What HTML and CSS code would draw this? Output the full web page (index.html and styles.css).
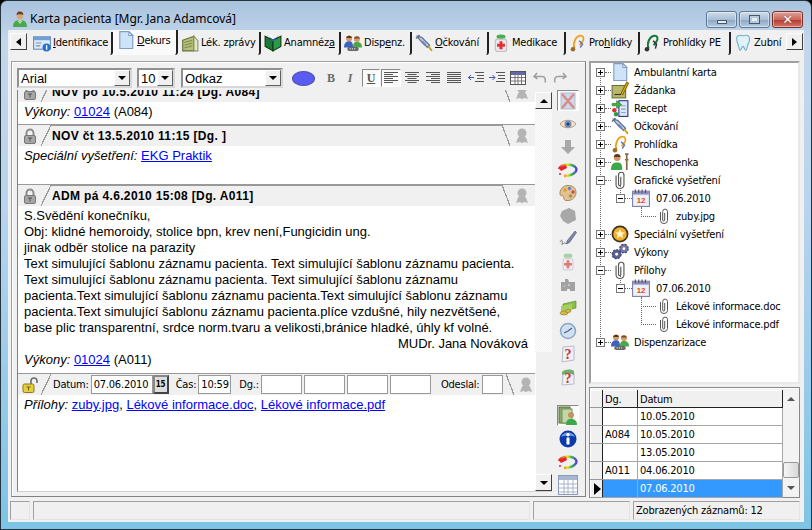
FILE: index.html
```html
<!DOCTYPE html>
<html lang="cs">
<head>
<meta charset="utf-8">
<title>Karta pacienta</title>
<link rel="stylesheet" href="styles.css">
</head>
<body>
<svg class="defs" width="0" height="0" aria-hidden="true">
<defs>
<symbol id="person" viewBox="0 0 16 16"><ellipse cx="8" cy="4.500" rx="3.200" ry="4" fill="#d9a478"/><path d="M4.600 4C4.600 1 6.500 .5 8 .5s3.400 .7 3.400 3.500C10 3 6 3 4.600 4z" fill="#6b4320"/><path d="M1 16c0-5 3-6.500 5-7l2 2 2-2c2 .5 5 2 5 7z" fill="#4aa84a"/><path d="M6 9l2 2 2-2 .6 1L8 13 5.400 10z" fill="#a9e2a0"/></symbol>
<symbol id="doc" viewBox="0 0 16 16"><path d="M2.500 .5h8l3.500 3.500v11.500H2.500z" fill="#cfe3f8" stroke="#7e9fc4"/><path d="M10.500 .5v3.500H14z" fill="#fff" stroke="#7e9fc4"/></symbol>
<symbol id="card" viewBox="0 0 16 16"><rect x=".5" y="2.500" width="15" height="11" fill="#dcebfa" stroke="#6c8fb8"/><rect x=".5" y="2.500" width="15" height="3" fill="#6fa0d6"/><path d="M2.500 8h5M2.500 10.500h4" stroke="#7d8fa5"/><circle cx="12" cy="12" r="3.500" fill="#1e74c8"/><rect x="11.500" y="10" width="1.200" height="4" fill="#fff"/></symbol>
<symbol id="note" viewBox="0 0 16 16"><path d="M1.500 5.500l10-3.500v13h-10z" fill="#b7c078" stroke="#65703c"/><path d="M3 7.500l7-2M3 10l7-2M3 12.500l7-2" stroke="#808b4c"/><path d="M11.500 2L15 6v9h-3.500z" fill="#e5e8c8" stroke="#8b956a"/></symbol>
<symbol id="book" viewBox="0 0 16 16"><path d="M1 2l7 3.500V15L1 11z" fill="#1d7a35" stroke="#0d3b18"/><path d="M15 2L8 5.500V15l7-4z" fill="#2d9a4a" stroke="#0d3b18"/><path d="M3 1l5 4 5-4-5 6z" fill="#3a56b8"/><path d="M4 2l1 1M6 1l1 2M10 2l1 1" stroke="#fff"/></symbol>
<symbol id="group" viewBox="0 0 16 16"><circle cx="4.500" cy="4" r="2.700" fill="#d39a6a"/><path d="M2 3.500C2 1 7 1 7 3.500z" fill="#5b3a1c"/><path d="M0 12c0-4 2-5.500 4.500-5.500S8 8 8 12z" fill="#3e62c2"/><circle cx="11.500" cy="4.500" r="2.700" fill="#d39a6a"/><path d="M9 4C9 1.500 14 1.500 14 4z" fill="#7c4b1f"/><path d="M8 12c0-4 1-5 3.500-5S16 8 16 12z" fill="#49a849"/><rect x="3" y="11.500" width="10" height="3.500" rx="1.500" fill="#666"/><path d="M5 13.200h6" stroke="#ddd" stroke-dasharray="1 1"/></symbol>
<symbol id="syringe" viewBox="0 0 16 16"><path d="M2 2l4 1 7 7-2 2-7-7z" fill="#b9c9e2" stroke="#5d6e8c"/><path d="M7 6l3 3-1.500 1.500-3-3z" fill="#6c84c8"/><path d="M12 11l3 4" stroke="#c9a21b" stroke-width="1.500"/><path d="M1 4l3-3" stroke="#5d6e8c" stroke-width="1.500"/></symbol>
<symbol id="bottle" viewBox="0 0 16 16"><ellipse cx="8" cy="2.500" rx="4" ry="2" fill="#46b04a"/><rect x="3" y="4.500" width="10" height="11" rx="2" fill="#e8e6ea" stroke="#c1bec8"/><path d="M8 6.500v7M4.500 10h7" stroke="#e03030" stroke-width="2.600"/></symbol>
<symbol id="bottlefade" viewBox="0 0 16 16"><ellipse cx="8" cy="2.500" rx="4" ry="2" fill="#a8d2a8"/><rect x="3.500" y="5" width="9" height="10" rx="2" fill="#eee" stroke="#d5d2da"/><path d="M8 6.500v7M4.500 10h7" stroke="#e27878" stroke-width="2.400"/></symbol>
<symbol id="steth" viewBox="0 0 16 16"><path d="M5 13C3 8 6 2 10 1.500c3-.3 4 3 1.500 6L9.500 10" fill="none" stroke="#eaa21c" stroke-width="1.600"/><circle cx="3.500" cy="13.500" r="2" fill="#9b6b2a"/><path d="M9 6l3 3-2 3" fill="none" stroke="#5c77c9" stroke-width="1.300"/></symbol>
<symbol id="stethgreen" viewBox="0 0 16 16"><path d="M5 13C3 8 6 2 10 1.500c3-.3 4 3 1.500 6L9.500 10" fill="none" stroke="#157a3a" stroke-width="1.800"/><circle cx="3.500" cy="13.500" r="2" fill="#333"/><path d="M9 6l3 3-1 4" fill="none" stroke="#333" stroke-width="1.300"/></symbol>
<symbol id="tooth" viewBox="0 0 16 16"><path d="M3.500 1.500c2-1 3 0 4.500 0s2.500-1 4.500 0 1.500 5 0 7.500c-1 2-1 5.500-2 5.500S9 11 8 11s-1.500 3.500-2.500 3.500S4.500 11 3.500 9 1.500 2.500 3.500 1.500z" fill="#dff2fa" stroke="#74aecb"/></symbol>
<symbol id="pad" viewBox="0 0 16 16"><rect x="1" y="4" width="12" height="11" fill="#b7b96a" stroke="#6e7038"/><path d="M3 12h6" stroke="#333"/><path d="M9 11l5-10 1.500 1-5 10z" fill="#f3c11a" stroke="#8c6a08"/></symbol>
<symbol id="recipe" viewBox="0 0 16 16"><rect x="7" y="1.500" width="8" height="14" fill="#dbe8f6" stroke="#2e3a96"/><path d="M9 6h4M9 9h4M9 12h4" stroke="#8aa0c0"/><path d="M1 4h4V1.500L9.500 5 5 8.500V6H1z" fill="#3fb23f" stroke="#1d6f1d" stroke-width=".5"/><circle cx="3" cy="10" r="2" fill="#d33"/><circle cx="4.500" cy="13.500" r="2" fill="#2d9a4a"/></symbol>
<symbol id="crutch" viewBox="0 0 16 16"><circle cx="5.500" cy="4" r="3" fill="#cf9566"/><path d="M2.500 3.500C2.500 0 8.500 0 8.500 3.500z" fill="#5b3a1c"/><path d="M0 15c0-5 2-6.500 5.500-6.500S10 10 10 15z" fill="#3ba84a"/><path d="M12.500 1h3M14 1v14M12.500 6h3" stroke="#8a6a44" stroke-width="1.500"/></symbol>
<symbol id="clip" viewBox="0 0 16 16"><path d="M4.500 4v8.500a3.500 3 0 0 0 7 0V3.500a2.400 2.400 0 0 0-4.800 0v8.500a1 1 0 0 0 2 0V5" fill="none" stroke="#555" stroke-width="1"/></symbol>
<symbol id="cal" viewBox="0 0 16 16"><rect x=".5" y="2" width="15" height="13.500" fill="#eef0f8" stroke="#7f83a8"/><rect x="1" y="2" width="14" height="3" fill="#8b8ec2"/><path d="M3 .5v3M6 .5v3M9 .5v3M12 .5v3" stroke="#555"/><text x="8" y="12.500" text-anchor="middle" class="caltext">12</text></symbol>
<symbol id="star" viewBox="0 0 16 16"><circle cx="8" cy="8" r="7.500" fill="#3a3320"/><circle cx="8" cy="8" r="6" fill="#f4ae2c"/><path d="M8 3.500l1.300 3 3.200.2-2.500 2 .8 3.100L8 10.100l-2.800 1.700.8-3.100-2.500-2 3.200-.2z" fill="#fff3c8"/></symbol>
<symbol id="gears" viewBox="0 0 16 16"><circle cx="5" cy="10" r="4" fill="#5a5f92" stroke="#3c4068" stroke-dasharray="2 1"/><circle cx="5" cy="10" r="1.300" fill="#fff"/><circle cx="11.500" cy="5" r="3.800" fill="#77799e" stroke="#3c4068" stroke-dasharray="2 1"/><circle cx="11.500" cy="5" r="1.200" fill="#fff"/></symbol>
<symbol id="lock" viewBox="0 0 16 16"><path d="M4.500 8V5a3.500 3.500 0 0 1 7 0v3" fill="none" stroke="#8d8d8d" stroke-width="2"/><rect x="2.500" y="7.500" width="11" height="8" rx="1.500" fill="#a6a6a6" stroke="#777"/><path d="M6 10h4M8 10v3.500" stroke="#555"/></symbol>
<symbol id="unlock" viewBox="0 0 16 16"><path d="M9 7V4a3 3 0 0 1 6 0v2" fill="none" stroke="#6c6c6c" stroke-width="1.600"/><rect x="1" y="7" width="11" height="8.500" rx="1.500" fill="#e5cd3c" stroke="#8a7a1c"/><path d="M4.500 10h4M6.500 10v3.500" stroke="#6f6210"/></symbol>
<symbol id="ghost" viewBox="0 0 16 16"><circle cx="8" cy="5" r="4.500" fill="#b4b4b4"/><path d="M2 15c1-2 1-4 2.500-6h7C13 11 13 13 14 15l-3.500-1L8 15l-2.500-1z" fill="#b4b4b4"/></symbol>
<symbol id="xmark" viewBox="0 0 18 18"><rect x="2" y="1" width="14" height="16" fill="#cfd8e6" stroke="#b5bccb"/><path d="M3 2l12 14M15 2L3 16" stroke="#d88a8a" stroke-width="2.400"/></symbol>
<symbol id="eye" viewBox="0 0 18 18"><path d="M1 9c3-5 13-5 16 0-3 5-13 5-16 0z" fill="#f0e3cf" stroke="#b99a7a"/><circle cx="9" cy="9" r="3.500" fill="#6f8ec0"/><circle cx="9" cy="9" r="1.500" fill="#2c3a5c"/></symbol>
<symbol id="down" viewBox="0 0 18 18"><path d="M6 2h6v7h4l-7 7-7-7h4z" fill="#a8a8a8"/></symbol>
<symbol id="swirl" viewBox="0 0 22 18"><path d="M2 8c2-5 14-6 17-1 2 4-4 8-12 8" fill="none" stroke="url(#rb)" stroke-width="2.400"/><path d="M2 7l7-3 1 3-6 3z" fill="#e8202a"/><circle cx="3" cy="13" r="1" fill="#e8202a"/></symbol>
<linearGradient id="rb" x1="0" x2="1"><stop offset="0" stop-color="#e8202a"/><stop offset=".5" stop-color="#e8e020"/><stop offset=".7" stop-color="#3ac040"/><stop offset="1" stop-color="#5040d8"/></linearGradient>
<symbol id="palette" viewBox="0 0 18 18"><path d="M9 1.500C3.500 1.500 .5 6 1 10c.5 3 2 1 3 2s0 4 3 4.500c6 .8 10-3.500 10-8S14 1.500 9 1.500z" fill="#e6bf8e" stroke="#a98a64"/><circle cx="6" cy="6" r="1.700" fill="#d8a028"/><circle cx="10.500" cy="4.500" r="1.700" fill="#5a86c8"/><circle cx="14" cy="8" r="1.700" fill="#c84a4a"/><circle cx="11.500" cy="12" r="1.700" fill="#88a058"/></symbol>
<symbol id="blob" viewBox="0 0 18 18"><path d="M3 4l7-3 6 3 1 9-8 4-5-3-3-5z" fill="#a8a8a8"/></symbol>
<symbol id="pen" viewBox="0 0 18 18"><path d="M8 11l8-10 1.500 1.500-7 10-3 1.500z" fill="#7c8ab0" stroke="#47506c" stroke-width=".6"/><path d="M1 12c2-4 3 0 2 2s3-3 4 0" fill="none" stroke="#777"/></symbol>
<symbol id="puzzle" viewBox="0 0 18 18"><path d="M2 6h4V3h3l1 3h6v9h-5v-2H8v2H2z" fill="#a2a2a2"/><path d="M5 10h1M9 9h2" stroke="#eee"/></symbol>
<symbol id="money" viewBox="0 0 18 18"><path d="M4 5l13-3v7L4 12z" fill="#8bbf4a" stroke="#4f8028" stroke-width=".6"/><path d="M2 7l11-2v6L2 13z" fill="#a6d05c"/><ellipse cx="5" cy="14" rx="4" ry="2" fill="#d8b850" stroke="#937a20" stroke-width=".6"/><ellipse cx="9" cy="12" rx="3" ry="1.500" fill="#d8b850" stroke="#937a20" stroke-width=".6"/></symbol>
<symbol id="clock" viewBox="0 0 18 18"><circle cx="9" cy="9" r="7.500" fill="#cfe0f2" stroke="#8da6c8" stroke-width="1.500"/><path d="M9 9l4-3M9 9L5 11" stroke="#50607c" stroke-width="1.200"/></symbol>
<symbol id="quest" viewBox="0 0 18 18"><path d="M4 2l11-1v14L3 17z" fill="#eef0f4" stroke="#b8bccb"/><text x="9" y="14" text-anchor="middle" class="qtext">?</text></symbol>
<symbol id="questgreen" viewBox="0 0 18 18"><path d="M4 6l11-1v11L3 17z" fill="#eef0f4" stroke="#b8bccb"/><path d="M3 4c3-3 9-3 12-1v4c-4-2-8-2-12 0z" fill="#6fb06f"/><text x="9" y="15" text-anchor="middle" class="qtext">?</text></symbol>
<symbol id="folderp" viewBox="0 0 20 20"><rect x="1" y="1" width="11" height="16" fill="#8aa86a" stroke="#58703e"/><rect x="4" y="3" width="10" height="14" fill="#c0d8a8" stroke="#74905a"/><circle cx="13" cy="9" r="3" fill="#c98f5e"/><path d="M8 19c0-5 2-6 5-6s6 1 6 6z" fill="#3ba84a"/></symbol>
<symbol id="info" viewBox="0 0 18 18"><circle cx="9" cy="9" r="8.500" fill="#0c3aa8"/><path d="M2 7c2-6 12-6 14 0-4-2-10-2-14 0z" fill="#6f9ae6"/><rect x="7.500" y="7.500" width="3" height="7" fill="#fff"/><circle cx="9" cy="4.700" r="1.700" fill="#fff"/></symbol>
<symbol id="table" viewBox="0 0 20 20"><rect x=".5" y=".5" width="19" height="19" fill="#fff" stroke="#8a9bb8"/><rect x="1" y="1" width="18" height="4" fill="#a8b8d0"/><path d="M1 9h18M1 13h18M1 17h18M6 5v14M10 5v14M15 5v14" stroke="#a6b4cb"/></symbol>
<symbol id="tbl" viewBox="0 0 16 16"><rect x=".5" y="1.500" width="15" height="13" fill="#fff" stroke="#555"/><rect x="1" y="2" width="14" height="3" fill="#6468a8"/><path d="M1 7.500h14M1 11h14M5 5v9M8 5v9M11.500 5v9" stroke="#777"/></symbol>
<symbol id="undo" viewBox="0 0 16 16"><path d="M5 3L2 6.500 5.500 9M2.500 6.500H10c3 0 4 3 3 6" fill="none" stroke="#9d9d9d" stroke-width="1.500"/></symbol>
<symbol id="redo" viewBox="0 0 16 16"><path d="M11 3l3 3.500L10.500 9M13.500 6.500H6c-3 0-4 3-3 6" fill="none" stroke="#9d9d9d" stroke-width="1.500"/></symbol>
<symbol id="al-l" viewBox="0 0 14 12"><path d="M0 .5h14M0 2.500h9M0 4.500h14M0 6.500h9M0 8.500h14M0 10.500h9" stroke="#555"/></symbol>
<symbol id="al-c" viewBox="0 0 14 12"><path d="M0 .5h14M2.500 2.500h9M0 4.500h14M2.500 6.500h9M0 8.500h14M2.500 10.500h9" stroke="#555"/></symbol>
<symbol id="al-r" viewBox="0 0 14 12"><path d="M0 .5h14M5 2.500h9M0 4.500h14M5 6.500h9M0 8.500h14M5 10.500h9" stroke="#555"/></symbol>
<symbol id="al-j" viewBox="0 0 14 12"><path d="M0 .5h14M0 2.500h14M0 4.500h14M0 6.500h14M0 8.500h14M0 10.500h14" stroke="#555"/></symbol>
<symbol id="ind-l" viewBox="0 0 16 12"><path d="M7 .5h9M9 3.500h7M9 6.500h7M7 9.500h9" stroke="#555"/><path d="M0 5.500h6M3 3l-2.500 2.500L3 8" fill="none" stroke="#4a50b0"/></symbol>
<symbol id="ind-r" viewBox="0 0 16 12"><path d="M7 .5h9M9 3.500h7M9 6.500h7M7 9.500h9" stroke="#555"/><path d="M0 5.500h6M3.500 3L6 5.500 3.500 8" fill="none" stroke="#4a50b0"/></symbol>
</defs>
</svg>

<div class="window">
  <header class="titlebar">
    <svg class="ico16"><use href="#person"/></svg>
    <span class="title">Karta pacienta [Mgr. Jana Adamcová]</span>
    <div class="caption">
      <span class="capbtn"><i class="gl-min"></i></span>
      <span class="capbtn"><i class="gl-max"></i></span>
      <span class="capbtn close"><span class="gl-x">✕</span></span>
    </div>
  </header>

  <nav class="tabs">
    <span class="nudge"><i class="tri-left"></i></span>
    <span class="tab w83"><svg class="ico18"><use href="#card"/></svg><span><u>I</u>dentifikace</span></span>
    <span class="tab active w65"><svg class="ico18"><use href="#doc"/></svg><span><u>D</u>ekurs</span></span>
    <span class="tab w83"><svg class="ico18"><use href="#note"/></svg><span>Lék. zprávy</span></span>
    <span class="tab w80"><svg class="ico18"><use href="#book"/></svg><span>Anamnéz<u>a</u></span></span>
    <span class="tab w71"><svg class="ico18"><use href="#group"/></svg><span>Disp<u>e</u>nz.</span></span>
    <span class="tab w77"><svg class="ico18"><use href="#syringe"/></svg><span><u>O</u>čkování</span></span>
    <span class="tab w77"><svg class="ico18"><use href="#bottle"/></svg><span>Medikace</span></span>
    <span class="tab w74"><svg class="ico18"><use href="#steth"/></svg><span>Pro<u>h</u>lídky</span></span>
    <span class="tab w91"><svg class="ico18"><use href="#stethgreen"/></svg><span>Prohlídky PE</span></span>
    <span class="tab w54 last"><svg class="ico18"><use href="#tooth"/></svg><span>Zubní</span></span>
    <span class="nudge right"><i class="tri-right"></i></span>
  </nav>

  <div class="client">
    <main class="work">
      <section class="leftpane">
        <div class="fmtbar">
          <span class="combo w115"><span class="val">Arial</span><i class="drop"></i></span>
          <span class="combo w38"><span class="val">10</span><i class="drop"></i></span>
          <span class="combo w102"><span class="val">Odkaz</span><i class="drop"></i></span>
          <i class="colordot"></i>
          <b class="fb">B</b>
          <i class="fi">I</i>
          <span class="fu pressed">U</span>
          <span class="alb pressed"><svg class="alg"><use href="#al-l"/></svg></span>
          <span class="alb"><svg class="alg"><use href="#al-c"/></svg></span>
          <span class="alb"><svg class="alg"><use href="#al-r"/></svg></span>
          <span class="alb"><svg class="alg"><use href="#al-j"/></svg></span>
          <span class="alb gapl"><svg class="indg"><use href="#ind-l"/></svg></span>
          <span class="alb"><svg class="indg"><use href="#ind-r"/></svg></span>
          <span class="alb"><svg class="ico16"><use href="#tbl"/></svg></span>
          <span class="alb gapl"><svg class="ico16"><use href="#undo"/></svg></span>
          <span class="alb"><svg class="ico16"><use href="#redo"/></svg></span>
        </div>

        <div class="editrow">
          <div class="editor">
            <div class="doc">
              <article class="rec clipped">
                <div class="rechead">
                  <svg class="ico16"><use href="#lock"/></svg><i class="slant"></i>
                  <b class="rectitle">NOV po 10.5.2010 11:24 [Dg. A084]</b><i class="slant back"></i>
                  <svg class="ico16 ghost"><use href="#ghost"/></svg>
                </div>
                <div class="recbody short"><p><em>Výkony:</em> <a>01024</a> (A084)</p></div>
              </article>
              <article class="rec">
                <div class="rechead">
                  <svg class="ico16"><use href="#lock"/></svg><i class="slant"></i>
                  <b class="rectitle">NOV čt 13.5.2010 11:15 [Dg. ]</b><i class="slant back"></i>
                  <svg class="ico16 ghost"><use href="#ghost"/></svg>
                </div>
                <div class="recbody tall"><p><em>Speciální vyšetření:</em> <a>EKG Praktik</a></p></div>
              </article>
              <article class="rec">
                <div class="rechead">
                  <svg class="ico16"><use href="#lock"/></svg><i class="slant"></i>
                  <b class="rectitle">ADM pá 4.6.2010 15:08 [Dg. A011]</b><i class="slant back"></i>
                  <svg class="ico16 ghost"><use href="#ghost"/></svg>
                </div>
                <div class="recbody full">
                  <p>S.Svědění konečníku,</p>
                  <p>Obj: klidné hemoroidy, stolice bpn, krev není,Fungicidin ung.</p>
                  <p>jinak odběr stolice na parazity</p>
                  <p>Text simulující šablonu záznamu pacienta. Text simulující šablonu záznamu pacienta.</p>
                  <p>Text simulující šablonu záznamu pacienta. Text simulující šablonu záznamu</p>
                  <p>pacienta.Text simulující šablonu záznamu pacienta.Text simulující šablonu záznamu</p>
                  <p>pacienta.Text simulující šablonu záznamu pacienta.plíce vzdušné, hily nezvětšené,</p>
                  <p>base plic transparentní, srdce norm.tvaru a velikosti,bránice hladké, úhly kf volné.</p>
                  <p class="sign">MUDr. Jana Nováková</p>
                  <p><em>Výkony:</em> <a>01024</a> (A011)</p>
                </div>
              </article>
              <article class="rec">
                <div class="rechead form">
                  <svg class="ico16 unl"><use href="#unlock"/></svg><i class="slant"></i>
                  <label class="flabel">Datum:</label><span class="field w62">07.06.2010</span><span class="calbtn">15</span>
                  <label class="flabel l6">Čas:</label><span class="field w33">10:59</span>
                  <label class="flabel l8">Dg.:</label><span class="field w41"></span><span class="field w41"></span><span class="field w41"></span><span class="field w41"></span>
                  <label class="flabel l8">Odeslal:</label><span class="field w22"></span>
                  <i class="slant back"></i>
                  <svg class="ico16 ghost"><use href="#ghost"/></svg>
                </div>
                <div class="recbody"><p><em>Přílohy:</em> <a>zuby.jpg</a>, <a>Lékové informace.doc</a>, <a>Lékové informace.pdf</a></p></div>
              </article>
            </div>
            <div class="vscroll">
              <span class="sbtn"><i class="tri-up"></i></span>
              <span class="strack"></span>
              <span class="sthumb"></span>
              <span class="sbtn"><i class="tri-down"></i></span>
            </div>
          </div>

          <aside class="sidebar">
            <span class="sb pressed"><svg class="ico18"><use href="#xmark"/></svg></span>
            <span class="sb"><svg class="ico18"><use href="#eye"/></svg></span>
            <span class="sb"><svg class="ico18"><use href="#down"/></svg></span>
            <span class="sb"><svg class="ico20"><use href="#swirl"/></svg></span>
            <span class="sb"><svg class="ico18"><use href="#palette"/></svg></span>
            <span class="sb"><svg class="ico18"><use href="#blob"/></svg></span>
            <span class="sb"><svg class="ico18"><use href="#pen"/></svg></span>
            <span class="sb"><svg class="ico18"><use href="#bottlefade"/></svg></span>
            <span class="sb"><svg class="ico18"><use href="#puzzle"/></svg></span>
            <span class="sb"><svg class="ico18"><use href="#money"/></svg></span>
            <span class="sb"><svg class="ico18"><use href="#clock"/></svg></span>
            <span class="sb"><svg class="ico18"><use href="#quest"/></svg></span>
            <span class="sb"><svg class="ico18"><use href="#questgreen"/></svg></span>
            <span class="sb sep pressed"><svg class="ico20"><use href="#folderp"/></svg></span>
            <span class="sb"><svg class="ico18"><use href="#info"/></svg></span>
            <span class="sb"><svg class="ico20"><use href="#swirl"/></svg></span>
            <span class="sb"><svg class="ico20"><use href="#table"/></svg></span>
          </aside>
        </div>
      </section>

      <section class="rightpane">
        <div class="tree">
          <div class="node"><i class="exp plus"></i><i class="dots"></i><svg class="ico18"><use href="#doc"/></svg><span>Ambulantní karta</span></div>
          <div class="node"><i class="exp plus"></i><i class="dots"></i><svg class="ico18"><use href="#pad"/></svg><span>Žádanka</span></div>
          <div class="node"><i class="exp plus"></i><i class="dots"></i><svg class="ico18"><use href="#recipe"/></svg><span>Recept</span></div>
          <div class="node"><i class="exp plus"></i><i class="dots"></i><svg class="ico18"><use href="#syringe"/></svg><span>Očkování</span></div>
          <div class="node"><i class="exp plus"></i><i class="dots"></i><svg class="ico18"><use href="#steth"/></svg><span>Prohlídka</span></div>
          <div class="node"><i class="exp plus"></i><i class="dots"></i><svg class="ico18"><use href="#crutch"/></svg><span>Neschopenka</span></div>
          <div class="node"><i class="exp minus"></i><i class="dots"></i><svg class="ico18"><use href="#clip"/></svg><span>Grafické vyšetření</span></div>
          <div class="node lv2"><i class="exp minus"></i><i class="dots"></i><svg class="ico18"><use href="#cal"/></svg><span>07.06.2010</span></div>
          <div class="node lv3 first"><i class="elbow"></i><svg class="ico16"><use href="#clip"/></svg><span>zuby.jpg</span></div>
          <div class="node"><i class="exp plus"></i><i class="dots"></i><svg class="ico18"><use href="#star"/></svg><span>Speciální vyšetření</span></div>
          <div class="node"><i class="exp plus"></i><i class="dots"></i><svg class="ico18"><use href="#gears"/></svg><span>Výkony</span></div>
          <div class="node"><i class="exp minus"></i><i class="dots"></i><svg class="ico18"><use href="#clip"/></svg><span>Přílohy</span></div>
          <div class="node lv2"><i class="exp minus"></i><i class="dots"></i><svg class="ico18"><use href="#cal"/></svg><span>07.06.2010</span></div>
          <div class="node lv3 first"><i class="elbow"></i><svg class="ico16"><use href="#clip"/></svg><span>Lékové informace.doc</span></div>
          <div class="node lv3"><i class="elbow long"></i><svg class="ico16"><use href="#clip"/></svg><span>Lékové informace.pdf</span></div>
          <div class="node"><i class="exp plus"></i><i class="dots"></i><svg class="ico18"><use href="#group"/></svg><span>Dispenzarizace</span></div>
        </div>
        <div class="gridbox">
          <table class="grid">
            <thead><tr><th class="ind"></th><th class="dg">Dg.</th><th>Datum</th></tr></thead>
            <tbody>
              <tr><td class="ind"></td><td></td><td>10.05.2010</td></tr>
              <tr><td class="ind"></td><td>A084</td><td>10.05.2010</td></tr>
              <tr><td class="ind"></td><td></td><td>13.05.2010</td></tr>
              <tr><td class="ind"></td><td>A011</td><td>04.06.2010</td></tr>
              <tr class="sel"><td class="ind"><i class="tri-cur"></i></td><td></td><td>07.06.2010</td></tr>
            </tbody>
          </table>
          <div class="gscroll">
            <span class="gsbtn"><i class="tri-up grey"></i></span>
            <span class="gtrack"></span>
            <span class="gthumb"></span>
            <span class="gsbtn"><i class="tri-down grey"></i></span>
          </div>
        </div>
      </section>
    </main>
    <footer class="status">
      <span class="cell c1"></span>
      <span class="cell c2"></span>
      <span class="cell c3"></span>
      <span class="cell c4">Zobrazených záznamů: 12</span>
    </footer>
  </div>
</div>
</body>
</html>
```
FILE: styles.css
```css
* { box-sizing: border-box; }
html, body { margin: 0; padding: 0; }
body { width: 812px; height: 530px; overflow: hidden; background: #000; font-family: "DejaVu Sans Condensed", "DejaVu Sans", sans-serif; font-size: 11px; letter-spacing: -.2px; color: #000; }
.defs { position: absolute; }
svg { display: block; flex: none; }
i { display: block; flex: none; }
.caltext { font: bold 7px "Liberation Sans", sans-serif; fill: #e8480c; }
.qtext { font: bold 14px "Liberation Serif", serif; fill: #c83030; }
.ico16 { width: 16px; height: 16px; }
.ico18 { width: 18px; height: 18px; }
.ico20 { width: 22px; height: 20px; }

.window { width: 812px; height: 530px; display: flex; flex-direction: column; padding: 0 7px 7px; border: 1px solid #25343f; border-radius: 7px 7px 0 0; background: linear-gradient(#a9c3dc 0, #c2d7ec 40px, #b9d4ee 200px, #7cc4e6 530px); }

.titlebar { height: 29px; display: flex; align-items: center; padding: 6px 0 0 4px; flex: none; }
.title { margin-left: 2px; font: 12px "Noto Sans", sans-serif; letter-spacing: 0; }
.caption { margin-left: auto; margin-right: 1px; margin-top: 2px; display: flex; gap: 2px; }
.capbtn { width: 31px; height: 17px; border: 1px solid #5f7a97; border-radius: 3px; background: linear-gradient(#cfdcea, #a9bfd6 50%, #8aa6c4 52%, #b6cadf); display: flex; align-items: center; justify-content: center; box-shadow: inset 0 0 0 1px rgba(255,255,255,.45); }
.capbtn.close { border-color: #7a2f26; background: linear-gradient(#e2a096, #c8685a 50%, #b33a2a 52%, #d2776a); color: #fff; }
.gl-min { width: 10px; height: 4px; margin-top: 4px; background: #e6ecf3; border: 1px solid #46586c; }
.gl-max { width: 11px; height: 9px; background: #e6ecf3; border: 1px solid #46586c; box-shadow: inset 0 0 0 2px #b8c9db; }
.gl-x { font: bold 13px/13px "DejaVu Sans", sans-serif; text-shadow: 0 0 1px #5c1d14; }

.tabs { height: 25px; flex: none; display: flex; align-items: flex-end; background: #f0f0f0; padding-left: 2px; }
.nudge { width: 17px; height: 17px; flex: none; align-self: center; margin: 0 3px 2px 0; background: #f0f0f0; border: 1px solid; border-color: #fff #404040 #404040 #fff; display: flex; align-items: center; justify-content: center; }
.nudge.right { margin: 0 0 2px 1px; }
.tri-left { border: 4px solid transparent; border-right: 5px solid #000; border-left: 0; }
.tri-right { border: 4px solid transparent; border-left: 5px solid #000; border-right: 0; }
.tri-up { border: 4px solid transparent; border-bottom: 4px solid #000; border-top: 0; }
.tri-down { border: 4px solid transparent; border-top: 4px solid #000; border-bottom: 0; }
.tri-up.grey { border-bottom-color: #555; }
.tri-down.grey { border-top-color: #555; }
.tri-cur { border: 6px solid transparent; border-left: 7px solid #000; border-right: 0; margin-left: 3px; }
.tab { height: 23px; flex: none; display: flex; align-items: center; gap: 2px; padding: 0 0 2px 3px; border-right: 2px solid #222; border-radius: 0 0 3px 0; white-space: nowrap; overflow: hidden; }
.tab.active { height: 25px; background: #fafafa; border-left: 1px solid #fff; padding-bottom: 5px; }
.tab.last { border-right: 0; }
.w83 { width: 83px; } .w65 { width: 65px; } .w80 { width: 80px; } .w71 { width: 71px; } .w77 { width: 77px; } .w74 { width: 74px; } .w91 { width: 91px; } .w54 { width: 54px; }

.client { flex: 1; min-height: 0; display: flex; flex-direction: column; background: #f0f0f0; }
.work { flex: 1; min-height: 0; display: flex; padding: 6px 0 0 3px; }

.leftpane { width: 575px; height: 436px; flex: none; border: 1px solid; border-color: #a0a0a0 #808080 #808080 #a0a0a0; box-shadow: inset 1px 1px 0 #fff; padding: 0 0 0 5px; }
.fmtbar { height: 28px; display: flex; align-items: center; padding-top: 4px; }
.combo { height: 20px; display: flex; align-items: center; flex: none; background: #fff; border: 2px solid; border-color: #909090 #d8d8d8 #d8d8d8 #909090; font: 13px "Liberation Sans", sans-serif; letter-spacing: 0; }
.combo .val { flex: 1; padding-left: 2px; }
.w115 { width: 115px; margin-right: 5px; } .w38 { width: 38px; margin-right: 6px; } .w102 { width: 102px; margin-right: 9px; }
.drop { width: 16px; height: 16px; background: #f0f0f0; border: 1px solid; border-color: #fff #606060 #606060 #fff; position: relative; }
.drop::after { content: ""; position: absolute; left: 3px; top: 5px; border: 4px solid transparent; border-top: 4px solid #000; border-bottom: 0; }
.colordot { width: 23px; height: 15px; border-radius: 50%; background: #5a5cf0; border: 1px solid #4d4fb5; margin-right: 9px; }
.fb, .fi, .fu { width: 14px; text-align: center; font: bold 12px "Liberation Serif", serif; color: #6a6a6a; flex: none; }
.fi { font-style: italic; margin: 0 5px 0 5px; }
.fu { width: 18px; height: 18px; line-height: 16px; text-decoration: underline; color: #555; }
.pressed { border: 1px solid; border-color: #888 #fff #fff #888; background: #fafafa; }
.alb { width: 20px; height: 18px; flex: none; display: flex; align-items: center; justify-content: center; margin-left: 1px; }
.alb.gapl { margin-left: 2px; }
.alg { width: 14px; height: 12px; }
.indg { width: 16px; height: 12px; }
.alb:last-child { margin-left: 0; }

.editrow { display: flex; height: 403px; }
.editor { width: 535px; height: 402px; flex: none; display: flex; border-left: 1px solid #808080; border-bottom: 1px solid #d0d0d0; }
.doc { flex: 1; min-width: 0; background: #fff; overflow: hidden; }
.rec.clipped { margin-top: -9px; }
.rec + .rec { border-top: 1px solid #999; }
.rechead { height: 21px; display: flex; align-items: center; background: #f0f0f0; padding-left: 4px; }
.rechead .ico16 { margin-right: 1px; }
.slant { width: 10px; height: 21px; align-self: stretch; background: linear-gradient(to bottom right, transparent calc(50% - .6px), #999 calc(50% - .6px), #999 calc(50% + .6px), transparent calc(50% + .6px)); margin-left: 2px; }
.slant.back { width: 8px; transform: scaleX(-1); margin: 0; }
.rectitle { flex: 1; font: bold 12px/20px "Liberation Sans", sans-serif; letter-spacing: .35px; border-top: 1px solid #999; height: 21px; padding-left: 1px; align-self: stretch; white-space: nowrap; overflow: hidden; }
.rechead .ghost { margin-left: 4px; margin-right: 5px; }
.recbody { padding: 2px 7px 0 6px; font: 13px/16px "Liberation Sans", sans-serif; letter-spacing: 0; }
.recbody p { margin: 0; white-space: nowrap; }
.recbody.short { height: 22px; }
.recbody.tall { height: 38px; }
.recbody.full { padding-bottom: 5px; }
.recbody em { font-style: italic; }
.recbody a { color: #0000ff; text-decoration: underline; }
.sign { text-align: right; }
.flabel { margin-left: 2px; margin-right: 2px; white-space: nowrap; }
.l6 { margin-left: 7px; } .l8 { margin-left: 8px; }
.field { height: 19px; line-height: 17px; background: #fff; border: 1px solid #999; flex: none; margin-right: 2px; padding-left: 2px; }
.w62 { width: 62px; margin-right: 0; } .w33 { width: 33px; margin-right: 0; } .w41 { width: 41px; } .w22 { width: 21px; margin-right: 3px; }
.calbtn { width: 16px; height: 19px; line-height: 15px; flex: none; text-align: center; font-size: 8px; font-weight: bold; border: 2px solid; border-color: #888 #444 #444 #888; background: #ddd; }

.vscroll { width: 17px; flex: none; position: relative; display: flex; flex-direction: column; background: #f0f0f0; padding: 2px 0 0; }
.sbtn { height: 17px; flex: none; background: #f0f0f0; border: 1px solid; border-color: #fff #404040 #404040 #fff; display: flex; align-items: center; justify-content: center; }
.strack { flex: 1; background: repeating-conic-gradient(#fff 0 25%, #f0f0f0 0 50%) 0 0 / 2px 2px; }
.sthumb { position: absolute; left: 0; right: 0; top: 262px; bottom: 17px; background: #f0f0f0; border-left: 1px solid #fff; }

.sidebar { width: 27px; flex: none; margin-left: 2px; display: flex; flex-direction: column; align-items: center; }
.sb { width: 22px; height: 21px; margin-bottom: 2px; display: flex; align-items: center; justify-content: center; flex: none; }
.sb.sep { margin-top: 16px; }

.rightpane { width: 211px; flex: none; margin-left: 3px; display: flex; flex-direction: column; }
.tree { height: 323px; flex: none; background: #fff; border: 2px solid; border-color: #a0a0a0 #e8e8e8 #e8e8e8 #a0a0a0; padding: 0 0 0 5px; position: relative; }
.tree::before { content: ""; position: absolute; left: 9px; top: 10px; height: 270px; border-left: 1px dotted #666; }
.node { height: 18px; display: flex; align-items: center; position: relative; }
.exp { width: 9px; height: 9px; border: 1px solid #777; background: #fff; position: relative; z-index: 1; }
.exp::before { content: ""; position: absolute; left: 1px; top: 3px; width: 5px; height: 1px; background: #000; }
.exp.plus::after { content: ""; position: absolute; left: 3px; top: 1px; width: 1px; height: 5px; background: #000; }
.dots { width: 6px; border-top: 1px dotted #666; }
.node span { margin-left: 5px; white-space: nowrap; }
.node.lv2 { padding-left: 20px; }
.node.lv2 .dots { width: 7px; }
.node.lv2::before { content: ""; position: absolute; left: 24px; top: -3px; height: 7px; border-left: 1px dotted #666; }
.node.lv2 span { margin-left: 6px; }
.node.lv3 { padding-left: 45px; }
.elbow { width: 15px; height: 10px; margin-top: -9px; border-left: 1px dotted #666; border-bottom: 1px dotted #666; }
.elbow.long { height: 19px; margin-top: -18px; }
.node.lv3 span { margin-left: 4px; }

.gridbox { height: 111px; width: 211px; flex: none; margin-top: 3px; border: 1px solid #888; box-shadow: inset 1px 1px 0 #fff; background: #f0f0f0; display: flex; padding: 2px 0 1px 0; }
.grid { border-collapse: collapse; width: 193px; height: 107px; table-layout: fixed; font-size: 11px; }
.grid th { height: 17px; font-weight: normal; text-align: left; padding: 0 2px; background: #f0f0f0; border: 1px solid; border-color: #fff #222 #222 #fff; }
.grid td { height: 18px; padding: 0 2px; border: 1px solid #a6a6a6; background: #fff; }
.grid .ind { width: 12px; background: #f0f0f0; padding: 0; border: 1px solid; border-color: #fff #222 #999 #fff; }
.grid .dg { width: 35px; }
.grid tr.sel td { background: #3399ff; color: #fff; }
.grid tr.sel td.ind { background: #f0f0f0; }
.gscroll { width: 16px; flex: none; display: flex; flex-direction: column; position: relative; background: #f3f3f3; }
.gsbtn { height: 17px; flex: none; display: flex; align-items: center; justify-content: center; }
.gtrack { flex: 1; }
.gthumb { position: absolute; left: 0; right: 0; top: 72px; height: 16px; background: linear-gradient(to right, #f5f5f5, #d8d8d8); border: 1px solid #999; border-radius: 2px; }

.status { height: 23px; flex: none; display: flex; gap: 3px; padding: 2px 0 0 2px; }
.cell { height: 19px; border: 1px solid; border-color: #a0a0a0 #e4e4e4 #e4e4e4 #a0a0a0; line-height: 17px; padding-left: 2px; white-space: nowrap; }
.c1 { width: 20px; } .c2 { width: 497px; } .c3 { width: 97px; } .c4 { width: 167px; }
```
